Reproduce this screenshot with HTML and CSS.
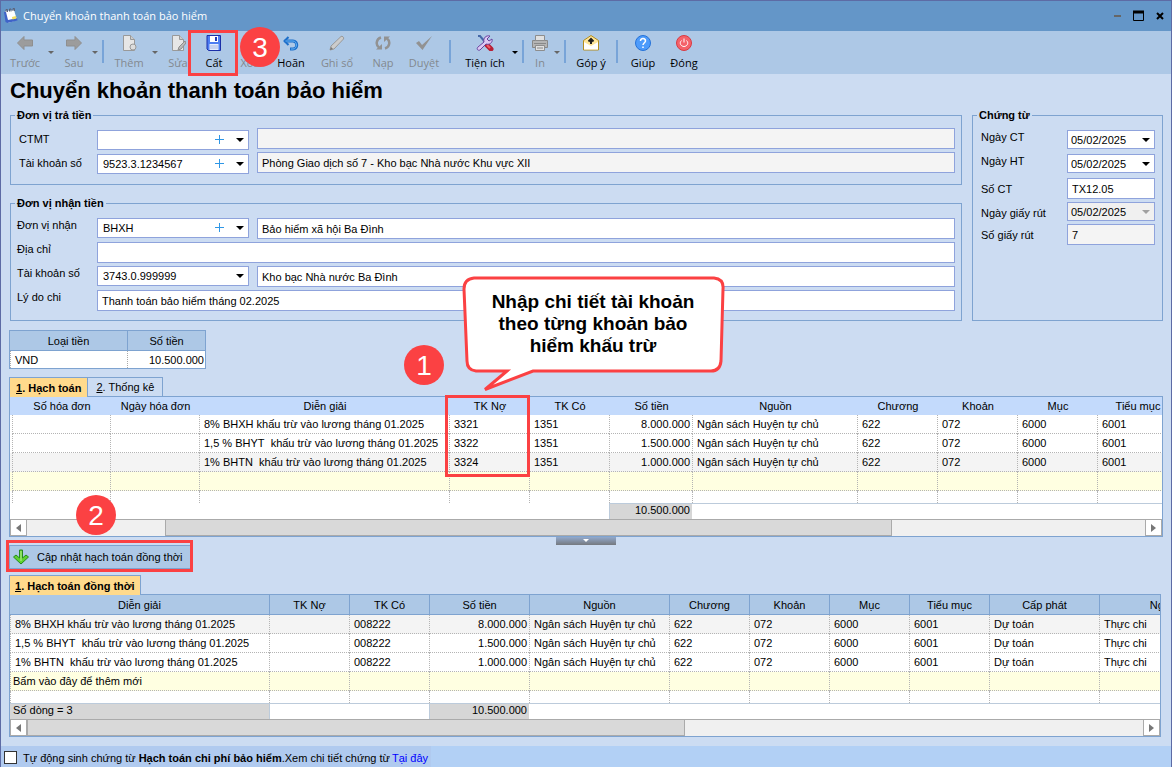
FILE: index.html
```html
<!DOCTYPE html>
<html lang="vi">
<head>
<meta charset="utf-8">
<title>Chuyển khoản thanh toán bảo hiểm</title>
<link rel="stylesheet" href="styles.css">
</head>
<body>
<div class="window">
  <header class="titlebar">
    <svg class="app-icon" width="14" height="16" viewBox="0 0 14 16"><path d="M1 3l9-1 3 10-9 3z" fill="#fff"/><path d="M0 4l2 0 2 8 9-2 .5 2.500-10 2.500-2-1z" fill="#3f63c8"/><path d="M8 9l4-1 .5 2.500-4 1z" fill="#f3dc5c"/><path d="M2 4V1.500h1.500V4M5.500 3.500V1H7v2.500M9 3V.5h1.500V3" fill="none" stroke="#5d6378"/></svg>
    <span class="window-title">Chuyển khoản thanh toán bảo hiểm</span>
    <div class="window-buttons">
      <button aria-label="Thu nhỏ"><svg width="8" height="12"><path d="M0 6h7" stroke="#666" stroke-width="2"/></svg></button>
      <button aria-label="Phóng to"><svg width="12" height="12"><path d="M.5 1v9.500h10V1" fill="none" stroke="#000"/><path d="M0 2h11" stroke="#000" stroke-width="3"/></svg></button>
      <button aria-label="Đóng cửa sổ"><svg width="8" height="12"><path d="M1 3l6 6M7 3l-6 6" stroke="#000" stroke-width="2"/></svg></button>
    </div>
  </header>

  <nav class="toolbar">
    <button class="tool w46" disabled><svg width="16" height="16"><path d="M.5 8L7 1.500V5h8.500v6H7v3.500z" fill="#9c9c9c" stroke="#8f8f8f"/></svg>Trước</button>
    <span class="caret dim"></span>
    <button class="tool w36" disabled><svg width="16" height="16"><path d="M15.500 8L9 1.500V5H.5v6H9v3.500z" fill="#9c9c9c" stroke="#8f8f8f"/></svg>Sau</button>
    <span class="caret dim"></span>
    <span class="sep"></span>
    <button class="tool w46" disabled><svg width="16" height="16"><path d="M2.500.5h7l4 4v11h-11z" fill="#e6e6e6" stroke="#999"/><path d="M9.500.5v4h4" fill="#ccc" stroke="#999"/><circle cx="12" cy="12" r="3" fill="#ddd" stroke="#999"/></svg>Thêm</button>
    <span class="caret dim"></span>
    <button class="tool w36" disabled><svg width="16" height="16"><path d="M2.500.5h7l4 4v11h-11z" fill="#e6e6e6" stroke="#999"/><path d="M9.500.5v4h4" fill="#ccc" stroke="#999"/><path d="M8 15l1-3 6-6 1 2-5 6z" fill="#bbb" stroke="#8d8d8d"/></svg>Sửa</button>
    <button class="tool w36"><svg width="16" height="16"><path d="M1 .5h13.500v15h-12L1 14z" fill="#4d7df2" stroke="#1b2fa8"/><path d="M4 1h8v6H4z" fill="#fff"/><path d="M9 2h2v4H9z" fill="#1f39b5"/><path d="M3.500 9h9v6h-9z" fill="#e4ecff"/><path d="M4 11h8M4 13h8" stroke="#a9b8e0"/></svg>Cất</button>
    <button class="tool w36" disabled><svg width="16" height="16"><path d="M3 3l10 10M13 3L3 13" stroke="#999" stroke-width="3"/></svg>Xóa</button>
    <button class="tool w46"><svg width="16" height="16"><path d="M1.500 6h8.500c5 0 5 8 0 8H7" fill="none" stroke="#1d6fca" stroke-width="3"/><path d="M5.500 2L1.500 6 5.500 10" fill="none" stroke="#1d6fca" stroke-width="2"/><path d="M2.500 6h7.500c4.500 0 4.500 8 0 8H8" fill="none" stroke="#68b5f5"/></svg>Hoãn</button>
    <button class="tool w46" disabled><svg width="16" height="16"><path d="M1 15l1-4L12 1.500c1-1 3.500 1 2.500 2.500L5 14z" fill="#ccc" stroke="#999"/><path d="M1 15l1-3 2 2z" fill="#777"/></svg>Ghi sổ</button>
    <button class="tool w46" disabled><svg width="16" height="16"><path d="M6 2.500C1 4 .5 10 4 12.500M10 13.500c5-1.500 5.500-7.500 2-10" fill="none" stroke="#929292" stroke-width="2.500"/><path d="M1 14.500h6V9zM15 1.500H9V7z" fill="#929292"/></svg>Nạp</button>
    <button class="tool w36" disabled><svg width="16" height="16"><path d="M0 8l3-2 3 4L16 1 6.500 15z" fill="#929292"/></svg>Duyệt</button>
    <span class="sep wide"></span>
    <button class="tool w54"><svg width="18" height="16"><path d="M2 1l2 0 5 6" fill="none" stroke="#4568a8" stroke-width="2"/><path d="M10 9l5 5" stroke="#b81f35" stroke-width="5" stroke-linecap="round"/><path d="M11 10l3 3" stroke="#f45e68" stroke-width="2"/><path d="M2 12l6-5c-1-4 2-7 6-6l-3 3 2 2 3-2c1 4-3 6-6 5l-6 6c-2 1-4-1-2-3z" fill="#dcc9f4" stroke="#69449e"/></svg>Tiện ích</button>
    <span class="caret"></span>
    <span class="sep"></span>
    <button class="tool w28" disabled><svg width="16" height="16"><path d="M.5 5.500h15v7H.5z" fill="#b4b4b4" stroke="#888"/><path d="M3.500.5h9v5h-9zM3.500 10.500h9v5h-9z" fill="#e0e0e0" stroke="#8d8d8d"/><path d="M5 13h6M2 8.500h12" stroke="#888"/></svg>In</button>
    <span class="caret dim"></span>
    <span class="sep"></span>
    <button class="tool w46"><svg width="16" height="16"><path d="M.5 5.500L8 .5l7.500 5v9.500H.5z" fill="#ffe69a" stroke="#b38d20"/><path d="M1 7l7 4 7-4v7.500H1z" fill="#fff"/><path d="M8 9V4M5.500 6.500L8 4l2.500 2.500" fill="none" stroke="#222" stroke-width="2"/></svg>Góp ý</button>
    <span class="sep"></span>
    <button class="tool w46"><svg width="16" height="16"><circle cx="8" cy="8" r="7.500" fill="#4d9bfb" stroke="#2572d8"/><path d="M5.500 6c0-3.500 5-3 5 0 0 1.500-2.500 2-2.500 4M8 11.500V13" fill="none" stroke="#fff" stroke-width="1.500"/></svg>Giúp</button>
    <button class="tool w36"><svg width="16" height="16"><circle cx="8" cy="8" r="7.500" fill="#f4626a" stroke="#d83a42"/><path d="M8 3.500v4M5.500 5.500c-3 3 0 6 2.500 6s5.500-3 2.500-6" fill="none" stroke="#fff"/></svg>Đóng</button>
  </nav>

  <main class="content">
    <h1 class="page-title">Chuyển khoản thanh toán bảo hiểm</h1>

    <form class="voucher">
      <div class="parties">
        <fieldset class="group payer">
          <legend>Đơn vị trả tiền</legend>
          <label for="ctmt">CTMT</label>
          <span class="combo"><select id="ctmt"><option></option></select><svg class="add" width="9" height="9"><path d="M4.500 0v9M0 4.500h9" stroke="#2f97e6"/></svg></span>
          <input type="text" aria-label="Tên CTMT" readonly>
          <label for="payer-account">Tài khoản số</label>
          <span class="combo"><select id="payer-account"><option>9523.3.1234567</option></select><svg class="add" width="9" height="9"><path d="M4.500 0v9M0 4.500h9" stroke="#2f97e6"/></svg></span>
          <input type="text" aria-label="Nơi mở tài khoản" readonly value="Phòng Giao dịch số 7 - Kho bạc Nhà nước Khu vực XII">
        </fieldset>
        <fieldset class="group payee">
          <legend>Đơn vị nhận tiền</legend>
          <label for="payee">Đơn vị nhận</label>
          <span class="combo"><select id="payee"><option>BHXH</option></select><svg class="add" width="9" height="9"><path d="M4.500 0v9M0 4.500h9" stroke="#2f97e6"/></svg></span>
          <input type="text" aria-label="Tên đơn vị nhận" value="Bảo hiểm xã hội Ba Đình">
          <label for="address">Địa chỉ</label>
          <input type="text" id="address" class="span">
          <label for="payee-account">Tài khoản số</label>
          <span class="combo"><select id="payee-account"><option>3743.0.999999</option></select></span>
          <input type="text" aria-label="Ngân hàng nhận" value="Kho bạc Nhà nước Ba Đình">
          <label for="reason">Lý do chi</label>
          <input type="text" id="reason" class="span" value="Thanh toán bảo hiểm tháng 02.2025">
        </fieldset>
      </div>
      <fieldset class="group document">
        <legend>Chứng từ</legend>
        <label for="date-ct">Ngày CT</label>
        <span class="combo"><select id="date-ct"><option>05/02/2025</option></select></span>
        <label for="date-ht">Ngày HT</label>
        <span class="combo"><select id="date-ht"><option>05/02/2025</option></select></span>
        <label for="doc-no" class="mid">Số CT</label>
        <input type="text" id="doc-no" value="TX12.05">
        <label for="slip-date" class="mid">Ngày giấy rút</label>
        <span class="combo off"><select id="slip-date" disabled><option>05/02/2025</option></select></span>
        <label for="slip-no" class="mid">Số giấy rút</label>
        <input type="text" id="slip-no" readonly value="7">
      </fieldset>
    </form>

    <table class="currency">
      <colgroup><col class="c117"><col class="c78"></colgroup>
      <thead><tr><th>Loại tiền</th><th>Số tiền</th></tr></thead>
      <tbody><tr><td>VND</td><td class="num">10.500.000</td></tr></tbody>
    </table>

    <div class="tabs first">
      <button class="tab active"><u>1</u>. Hạch toán</button>
      <button class="tab"><u>2</u>. Thống kê</button>
    </div>
    <section class="grid entries">
      <table>
        <colgroup><col class="c2"><col class="c98"><col class="c89"><col class="c250"><col class="c80"><col class="c80"><col class="c83"><col class="c165"><col class="c80"><col class="c80"><col class="c80"><col class="c80"></colgroup>
        <thead><tr><th></th><th>Số hóa đơn</th><th>Ngày hóa đơn</th><th>Diễn giải</th><th>TK Nợ</th><th>TK Có</th><th>Số tiền</th><th>Nguồn</th><th>Chương</th><th>Khoản</th><th>Mục</th><th>Tiểu mục</th></tr></thead>
        <tbody>
          <tr><td></td><td></td><td></td><td>8% BHXH khấu trừ vào lương tháng 01.2025</td><td>3321</td><td>1351</td><td class="num">8.000.000</td><td>Ngân sách Huyện tự chủ</td><td>622</td><td>072</td><td>6000</td><td>6001</td></tr>
          <tr><td></td><td></td><td></td><td>1,5 % BHYT&nbsp; khấu trừ vào lương tháng 01.2025</td><td>3322</td><td>1351</td><td class="num">1.500.000</td><td>Ngân sách Huyện tự chủ</td><td>622</td><td>072</td><td>6000</td><td>6001</td></tr>
          <tr class="shade"><td></td><td></td><td></td><td>1% BHTN&nbsp; khấu trừ vào lương tháng 01.2025</td><td>3324</td><td>1351</td><td class="num">1.000.000</td><td>Ngân sách Huyện tự chủ</td><td>622</td><td>072</td><td>6000</td><td>6001</td></tr>
          <tr class="new-row"><td></td><td></td><td></td><td></td><td></td><td></td><td></td><td></td><td></td><td></td><td></td><td></td></tr>
          <tr class="blank"><td></td><td></td><td></td><td></td><td></td><td></td><td></td><td></td><td></td><td></td><td></td><td></td></tr>
        </tbody>
        <tfoot><tr><td colspan="6"></td><td class="num total">10.500.000</td><td colspan="5"></td></tr></tfoot>
      </table>
      <div class="scrollbar"><button aria-label="Cuộn trái"><svg width="5" height="8"><path d="M5 0v8L0 4z" fill="#777"/></svg></button><div class="track"><span class="thumb"></span></div><button aria-label="Cuộn phải"><svg width="5" height="8"><path d="M0 0v8l5-4z" fill="#777"/></svg></button></div>
    </section>
    <button class="splitter" aria-label="Thu gọn"><svg width="6" height="3"><path d="M0 0h6L3 3z" fill="#fff"/></svg></button>

    <button class="update"><svg width="16" height="16"><path d="M6.500 1h3v8l3.500-3 2.500 2L8 15 .5 8 3 6l3.500 3z" fill="#5fd12f" stroke="#268a1c"/><path d="M8 2v10" stroke="#b5f28f"/></svg>Cập nhật hạch toán đồng thời</button>

    <div class="tabs second">
      <button class="tab active"><u>1</u>. Hạch toán đồng thời</button>
    </div>
    <section class="grid mirrored">
      <table>
        <colgroup><col class="c259"><col class="c80"><col class="c80"><col class="c100"><col class="c140"><col class="c80"><col class="c80"><col class="c80"><col class="c80"><col class="c110"><col class="c150"></colgroup>
        <thead><tr><th>Diễn giải</th><th>TK Nợ</th><th>TK Có</th><th>Số tiền</th><th>Nguồn</th><th>Chương</th><th>Khoản</th><th>Mục</th><th>Tiểu mục</th><th>Cấp phát</th><th>Nghiệp vụ</th></tr></thead>
        <tbody>
          <tr class="shade"><td>8% BHXH khấu trừ vào lương tháng 01.2025</td><td></td><td>008222</td><td class="num">8.000.000</td><td>Ngân sách Huyện tự chủ</td><td>622</td><td>072</td><td>6000</td><td>6001</td><td>Dự toán</td><td>Thực chi</td></tr>
          <tr><td>1,5 % BHYT&nbsp; khấu trừ vào lương tháng 01.2025</td><td></td><td>008222</td><td class="num">1.500.000</td><td>Ngân sách Huyện tự chủ</td><td>622</td><td>072</td><td>6000</td><td>6001</td><td>Dự toán</td><td>Thực chi</td></tr>
          <tr><td>1% BHTN&nbsp; khấu trừ vào lương tháng 01.2025</td><td></td><td>008222</td><td class="num">1.000.000</td><td>Ngân sách Huyện tự chủ</td><td>622</td><td>072</td><td>6000</td><td>6001</td><td>Dự toán</td><td>Thực chi</td></tr>
          <tr class="new-row"><td>Bấm vào đây để thêm mới</td><td></td><td></td><td></td><td></td><td></td><td></td><td></td><td></td><td></td><td></td></tr>
          <tr class="blank"><td></td><td></td><td></td><td></td><td></td><td></td><td></td><td></td><td></td><td></td><td></td></tr>
        </tbody>
        <tfoot><tr><td class="count">Số dòng = 3</td><td colspan="2" class="edge"></td><td class="num total">10.500.000</td><td colspan="7"></td></tr></tfoot>
      </table>
      <div class="scrollbar"><button aria-label="Cuộn trái"><svg width="5" height="8"><path d="M5 0v8L0 4z" fill="#777"/></svg></button><div class="track"><span class="thumb"></span></div><button aria-label="Cuộn phải"><svg width="5" height="8"><path d="M0 0v8l5-4z" fill="#777"/></svg></button></div>
    </section>
  </main>

  <footer class="statusbar">
    <div class="auto">
      <input type="checkbox" id="auto">
      <label for="auto">Tự động sinh chứng từ <b>Hạch toán chi phí bảo hiểm</b>.Xem chi tiết chứng từ</label>
      <a href="#">Tại đây</a>
    </div>
  </footer>

  <div class="mark mark-save"></div>
  <div class="mark mark-account"></div>
  <div class="mark mark-update"></div>
  <span class="badge step1">1</span>
  <span class="badge step2">2</span>
  <span class="badge step3">3</span>
  <div class="callout">
    <svg width="264" height="116" viewBox="462 276 264 116"><path d="M474 278H714Q724 279 723 289L721 361Q720 371 711 371H533L485 389.500 507 371H476Q467 370 467 361L464 289Q464 279 474 278Z" fill="#fff" stroke="#fb4143" stroke-width="3"/></svg>
    <p>Nhập chi tiết tài khoản<br>theo từng khoản bảo<br>hiểm khấu trừ</p>
  </div>
</div>
</body>
</html>
```
FILE: styles.css
```css
* { box-sizing: border-box; }

body {
  margin: 0;
  font: 11px/14px "Liberation Sans", Arial, sans-serif;
  color: #000;
}

button, input, select { font: inherit; color: inherit; margin: 0; border-radius: 0; }
button { padding: 0; border: 0; background: none; }
svg { display: block; flex: none; }

.window {
  position: relative;
  display: flex;
  flex-direction: column;
  min-height: 100vh;
  overflow: hidden;
  border: solid #5d6ba5;
  border-width: 1px 1px 0;
  background: #ccdcf2;
}

/* Title bar */
.titlebar {
  display: flex;
  align-items: center;
  height: 30px;
  padding: 0 7px 0 3px;
  background: #6496c8;
  color: #fff;
  font: 11px/16px "Open Sans", "Noto Sans", sans-serif;
}
.window-title { margin-left: 5px; }
.window-buttons { display: flex; gap: 11px; margin-left: auto; }

/* Toolbar */
.toolbar {
  display: flex;
  height: 43px;
  padding: 4px 0 0 1px;
  background: #adc8e6;
}
.tool {
  display: flex;
  flex: none;
  flex-direction: column;
  align-items: center;
  gap: 4px;
  font: 11px/16px "Open Sans", "Noto Sans", sans-serif;
  white-space: nowrap;
}
.tool:disabled { color: #83898f; }
.w28 { width: 28px; }
.w36 { width: 36px; }
.w46 { width: 46px; }
.w54 { width: 54px; }
.caret { flex: none; width: 8px; padding-top: 16px; }
.caret::before {
  content: "";
  display: block;
  width: 0;
  border: 3px solid transparent;
  border-top-color: #000;
  border-bottom: 0;
}
.caret.dim::before { border-top-color: #666; }
.sep { flex: none; width: 6px; padding: 5px 2px 0; }
.sep.wide { width: 16px; padding: 5px 7px 0; }
.sep::before { content: ""; display: block; height: 23px; background: #78a4d8; }

/* Voucher form */
.content { flex: 1; padding: 0 8px 9px; }
.page-title {
  margin: 0 0 0 1px;
  font-size: 22px;
  line-height: 34px;
}
.voucher { display: flex; gap: 10px; margin-left: 1px; }
.parties { display: flex; flex: 1; flex-direction: column; gap: 11px; min-width: 0; }
.group {
  display: grid;
  align-items: start;
  min-width: 0;
  margin: 0;
  border: 1px solid #7ea3d0;
}
.group legend { margin-left: -4px; padding: 0 2px; font-weight: bold; }
.payer {
  grid-template-columns: 78px 152px minmax(0, 1fr);
  grid-auto-rows: 22px;
  row-gap: 2px;
  padding: 6px 6px 10px 8px;
}
.payer legend { margin-left: -4px; }
.payee legend { margin-left: -2px; }
.payer label { align-self: center; }
.payer .combo { align-self: end; }
.payer > input, .payee > input { margin-left: 8px; }
.payee {
  grid-template-columns: 80px 152px minmax(0, 1fr);
  grid-auto-rows: 22px;
  row-gap: 2px;
  padding: 8px 6px;
}
.payee > .span { grid-column: 2 / 4; margin-left: 0; }
.document {
  flex: none;
  grid-template-columns: 86px 88px;
  grid-template-rows: 24px 24px 24px 22px 21px;
  width: 191px;
  padding: 8px;
}
.document .mid { padding-top: 4px; }

input[type="text"], select {
  height: 21px;
  padding: 0 4px;
  border: 1px solid #8fa3dc;
  background: #fff;
}
input[type="text"] { min-width: 0; }
input[type="text"]:read-only { background: #f4f4f4; }
select { width: 100%; height: 20px; padding: 0 5px; appearance: none; }
.document select { height: 19px; padding: 0 3px; }
select:disabled { background: #f0f0f0; color: #000; opacity: 1; }
.combo { position: relative; display: block; }
.combo::after {
  content: "";
  position: absolute;
  top: 8px;
  right: 5px;
  border: 4px solid transparent;
  border-top-color: #000;
  border-bottom: 0;
  pointer-events: none;
}
.combo.off::after { border-top-color: #a0a0a0; }
.add { position: absolute; top: 5px; right: 25px; pointer-events: none; }

/* Tables */
table { border-collapse: separate; border-spacing: 0; table-layout: fixed; }
th, td { padding: 0; font-weight: normal; white-space: nowrap; overflow: hidden; }
.num { text-align: right; }

.c2 { width: 2px; }
.c78 { width: 78px; }
.c80 { width: 80px; }
.c83 { width: 83px; }
.c89 { width: 89px; }
.c98 { width: 98px; }
.c100 { width: 100px; }
.c110 { width: 110px; }
.c117 { width: 117px; }
.c140 { width: 140px; }
.c150 { width: 150px; }
.c165 { width: 165px; }
.c250 { width: 250px; }
.c259 { width: 259px; }

.currency { width: 197px; margin-top: 9px; border: 1px solid #7ea3d0; background: #fff; }
.currency th { height: 20px; border-bottom: 1px solid #7ea3d0; background: #adc8e6; }
.currency th + th { border-left: 1px solid #7ea3d0; }
.currency td { height: 17px; padding: 0 1px 0 4px; border-left: 1px dotted #aaa; }

.tabs { position: relative; display: flex; margin-bottom: -1px; }
.tabs.first { margin-top: 8px; }
.tabs.second { margin-top: 6px; }
.tab {
  height: 20px;
  padding: 0 8px;
  border: 1px solid #7ea3d0;
  background: #ccdcf2;
}
.tab + .tab { border-left: 0; }
.tab.active { padding: 0 5px; border-bottom: 0; background: #ffda8c; font-weight: bold; }
.tabs.first .active { padding: 0 6px; }

.grid { overflow: hidden; border: 1px solid #7ea3d0; background: #fff; }
.grid th { padding-left: 2px; }
.grid td { height: 19px; padding: 0 2px 0 4px; border: dotted #b4b4b4; border-width: 0 0 1px 1px; }
.entries table { width: 1167px; }
.entries th { height: 18px; background: #c3dafc; }
.entries td:first-child { border: 0; padding: 0; }
.mirrored { margin-right: 2px; }
.mirrored table { width: 1239px; }
.mirrored th { height: 20px; padding-left: 0; border: solid #7ea3d0; border-width: 0 0 1px 1px; background: #adc8e6; }
.mirrored th:first-child { border-left: 0; }
.grid .shade td { background: #f4f4f4; }
.grid .new-row td { padding-left: 2px; background: #ffffe1; }
.grid .blank td { height: 12px; border-bottom: 0; }
.grid tfoot td { height: 16px; padding-left: 3px; line-height: 13px; border: solid #bccbdb; border-width: 1px 0 0; vertical-align: top; }
.grid tfoot .total, .grid tfoot .count { background: #d6d6d6; }
.grid tfoot .edge, .grid tfoot .total { border-left-width: 1px; }

.scrollbar { display: flex; height: 17px; border-top: 1px solid #aaa; background: #f0f0f0; }
.scrollbar button {
  display: grid;
  flex: none;
  place-items: center;
  width: 17px;
  border: 1px solid #aaa;
  border-top: 0;
  background: #fff;
}
.track { display: flex; flex: 1; }
.thumb { border: 1px solid #aaa; border-width: 0 1px 1px; background: #d9d9d9; }
.entries .thumb { width: 65%; margin-left: 138px; }
.mirrored .thumb { width: 59%; }

.splitter {
  display: flex;
  justify-content: center;
  width: 60px;
  height: 8px;
  margin: 0 auto;
  padding-top: 2px;
  background: linear-gradient(#92a9cc, #75797f);
}
.update {
  display: flex;
  align-items: center;
  gap: 8px;
  height: 24px;
  padding: 0 8px 0 3px;
  border: 1px solid #7ea3d0;
  background: #adc8e6;
}

/* Status bar */
.statusbar { display: flex; height: 21px; background: #b2d0f5; }
.auto { display: flex; align-items: center; padding: 2px 3px 0 3px; background: #b0caef; }
.auto input {
  width: 13px;
  height: 13px;
  margin-right: 6px;
  border: 1px solid #333;
  background: #fff;
  appearance: none;
}
.auto a { margin-left: 2px; color: #00f; text-decoration: none; }

/* Guide annotations laid over the window */
.mark { position: absolute; border: 3px solid #fb4143; pointer-events: none; }
.mark-save { top: 29px; left: 187px; width: 50px; height: 46px; }
.mark-account { top: 394px; left: 444px; width: 85px; height: 82px; }
.mark-update { top: 539px; left: 5px; width: 187px; height: 32px; }
.badge {
  position: absolute;
  width: 40px;
  height: 40px;
  border-radius: 50%;
  background: #fb4143;
  color: #fff;
  font-size: 28px;
  line-height: 42px;
  text-align: center;
}
.step1 { top: 344px; left: 403px; }
.step2 { top: 494px; left: 75px; }
.step3 { top: 26px; left: 239px; }
.callout { position: absolute; top: 275px; left: 461px; }
.callout p {
  position: absolute;
  top: 15px;
  left: 0;
  width: 262px;
  margin: 0;
  font-size: 19px;
  line-height: 22px;
  font-weight: bold;
  text-align: center;
}
```
